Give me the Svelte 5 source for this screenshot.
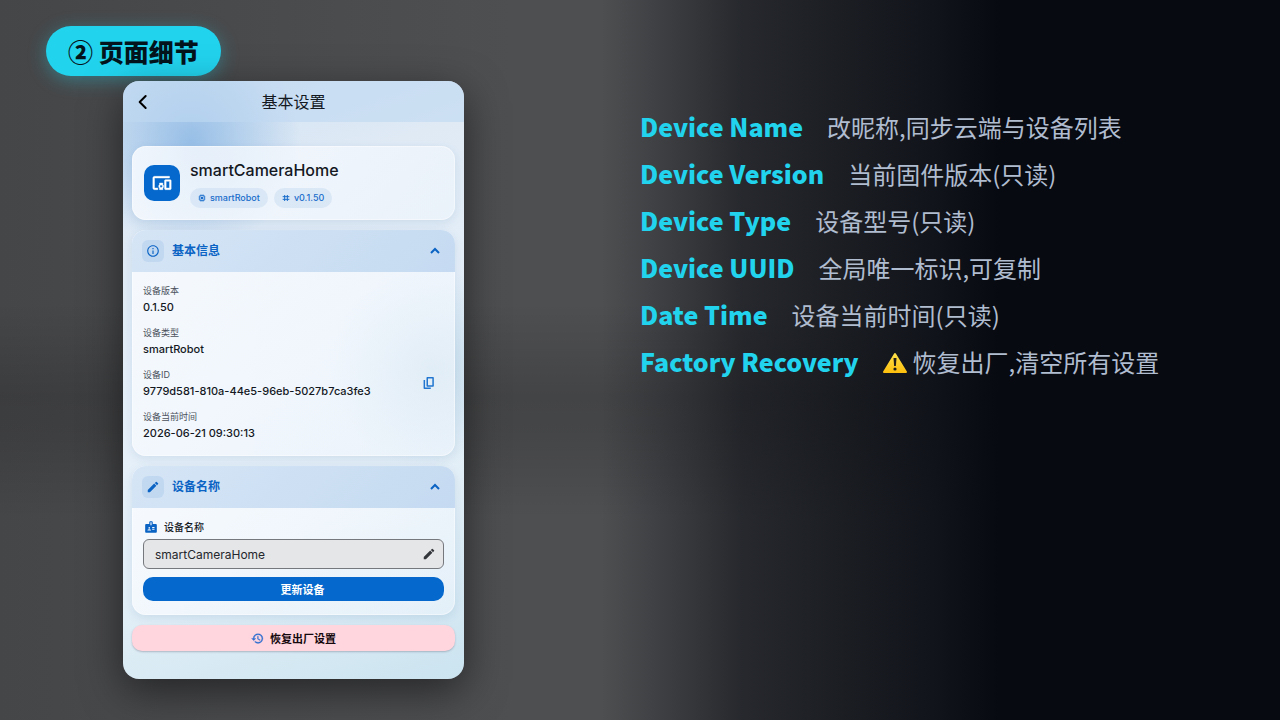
<script>
    let infoOpen = true;
    let nameOpen = true;
    let deviceName = "smartCameraHome";

    const info = [
        { label: "设备版本", value: "0.1.50" },
        { label: "设备类型", value: "smartRobot" },
        { label: "设备ID", value: "9779d581-810a-44e5-96eb-5027b7ca3fe3", copy: true },
        { label: "设备当前时间", value: "2026-06-21 09:30:13" },
    ];

    const notes = [
        { term: "Device Name", text: "改昵称,同步云端与设备列表" },
        { term: "Device Version", text: "当前固件版本(只读)" },
        { term: "Device Type", text: "设备型号(只读)" },
        { term: "Device UUID", text: "全局唯一标识,可复制" },
        { term: "Date Time", text: "设备当前时间(只读)" },
        { term: "Factory Recovery", text: "恢复出厂,清空所有设置", warn: true },
    ];

    const EDIT = "M3 17.25V21h3.75L17.81 9.94l-3.75-3.75L3 17.25zM20.71 7.04a1 1 0 0 0 0-1.41l-2.34-2.34a1 1 0 0 0-1.41 0l-1.83 1.83 3.75 3.75 1.83-1.83z";

    function copyValue(value){
        navigator.clipboard?.writeText(value);
    }
</script>

<main>
    <section class="left">
        <h1 class="chip">② 页面细节</h1>

        <div class="phone">
            <header class="topbar">
                <button class="back" aria-label="返回">
                    <svg viewBox="0 0 24 24"><path d="M16 3l-9 9 9 9" fill="none" stroke="currentColor" stroke-width="3" stroke-linecap="round" stroke-linejoin="round"/></svg>
                </button>
                <h2>基本设置</h2>
            </header>

            <div class="content">
                <div class="card device">
                    <div class="device-icon">
                        <svg viewBox="0 0 24 24"><path d="M3 6h18V4H3c-1.1 0-2 .9-2 2v12c0 1.1.9 2 2 2h4v-2H3V6zm10 6H9v1.78c-.61.55-1 1.33-1 2.22s.39 1.67 1 2.22V20h4v-1.78c.61-.55 1-1.34 1-2.22s-.39-1.67-1-2.22V12zm-2 5.5c-.83 0-1.5-.67-1.5-1.5s.67-1.5 1.5-1.5 1.5.67 1.5 1.5-.67 1.5-1.5 1.5zM22 8h-6c-.5 0-1 .5-1 1v10c0 .5.5 1 1 1h6c.5 0 1-.5 1-1V9c0-.5-.5-1-1-1zm-1 10h-4v-8h4v8z" stroke="currentColor" stroke-width="0.5"/></svg>
                    </div>
                    <div class="device-text">
                        <h3>{deviceName}</h3>
                        <div class="tags">
                            <span class="tag">
                                <svg viewBox="0 0 24 24"><path fill-rule="evenodd" d="M8 4V1h2v3h4V1h2v3h2a2 2 0 0 1 2 2v2h3v2h-3v4h3v2h-3v2a2 2 0 0 1-2 2h-2v3h-2v-3h-4v3H8v-3H6a2 2 0 0 1-2-2v-2H1v-2h3v-4H1V8h3V6a2 2 0 0 1 2-2zM7 7v10h10V7zM9 9h6v6H9z"/></svg>
                                smartRobot
                            </span>
                            <span class="tag">
                                <svg viewBox="0 0 24 24"><path d="M8 3v18M16 3v18M2 8h20M2 16h20" fill="none" stroke="currentColor" stroke-width="3"/></svg>
                                v0.1.50
                            </span>
                        </div>
                    </div>
                </div>

                <div class="card panel">
                    <button class="panel-head" aria-expanded={infoOpen} on:click={() => infoOpen = !infoOpen}>
                        <span class="badge">
                            <svg viewBox="0 0 24 24"><path d="M11 7h2v2h-2zm0 4h2v6h-2zm1-9C6.48 2 2 6.48 2 12s4.48 10 10 10 10-4.48 10-10S17.52 2 12 2zm0 18c-4.41 0-8-3.59-8-8s3.59-8 8-8 8 3.59 8 8-3.59 8-8 8z"/></svg>
                        </span>
                        <span class="panel-title">基本信息</span>
                        <svg class="arrow" class:closed={!infoOpen} viewBox="0 0 24 24"><path d="M6 15l6-6 6 6" fill="none" stroke="currentColor" stroke-width="3"/></svg>
                    </button>
                    {#if infoOpen}
                        <dl>
                            {#each info as row}
                                <div class="row">
                                    <div>
                                        <dt>{row.label}</dt>
                                        <dd>{row.value}</dd>
                                    </div>
                                    {#if row.copy}
                                        <button class="icon-btn copy" aria-label="复制" on:click={() => copyValue(row.value)}>
                                            <svg viewBox="0 0 24 24"><path d="M9 3h10v14H9zM4 7v14h11" fill="none" stroke="currentColor" stroke-width="2.6" stroke-linejoin="round"/></svg>
                                        </button>
                                    {/if}
                                </div>
                            {/each}
                        </dl>
                    {/if}
                </div>

                <div class="card panel">
                    <button class="panel-head" aria-expanded={nameOpen} on:click={() => nameOpen = !nameOpen}>
                        <span class="badge">
                            <svg viewBox="0 0 24 24"><path d={EDIT}/></svg>
                        </span>
                        <span class="panel-title">设备名称</span>
                        <svg class="arrow" class:closed={!nameOpen} viewBox="0 0 24 24"><path d="M6 15l6-6 6 6" fill="none" stroke="currentColor" stroke-width="3"/></svg>
                    </button>
                    {#if nameOpen}
                        <form on:submit|preventDefault>
                            <label for="device-name">
                                <svg viewBox="0 0 24 24"><path d="M20 7h-5V4c0-1.1-.9-2-2-2h-2c-1.1 0-2 .9-2 2v3H4c-1.1 0-2 .9-2 2v11c0 1.1.9 2 2 2h16c1.1 0 2-.9 2-2V9c0-1.1-.9-2-2-2zM9 12c.83 0 1.5.67 1.5 1.5S9.83 15 9 15s-1.5-.67-1.5-1.5S8.17 12 9 12zm3 6H6v-.75c0-1 2-1.5 3-1.5s3 .5 3 1.5V18zm1-9h-2V4h2v5zm5 7.5h-4V15h4v1.5zm0-3h-4V12h4v1.5z"/></svg>
                                设备名称
                            </label>
                            <div class="field">
                                <input id="device-name" type="text" bind:value={deviceName}>
                                <button type="button" class="icon-btn" aria-label="编辑">
                                    <svg viewBox="0 0 24 24"><path d={EDIT}/></svg>
                                </button>
                            </div>
                            <button class="update">更新设备</button>
                        </form>
                    {/if}
                </div>

                <button class="reset">
                    <svg viewBox="0 0 24 24"><path d="M13 3a9 9 0 0 0-9 9H1l3.89 3.89.07.14L9 12H6c0-3.87 3.13-7 7-7s7 3.13 7 7-3.13 7-7 7c-1.93 0-3.68-.79-4.94-2.06l-1.42 1.42A8.954 8.954 0 0 0 13 21a9 9 0 0 0 0-18zm-1 5v5l4.28 2.54.72-1.21-3.5-2.08V8H12z" stroke="currentColor" stroke-width="0.6"/></svg>
                    恢复出厂设置
                </button>
            </div>
        </div>
    </section>

    <ul class="notes">
        {#each notes as note}
            <li>
                <strong>{note.term}</strong>
                <span>
                    {#if note.warn}
                        <svg class="warn" viewBox="0 0 24 24" role="img" aria-label="警告">
                            <defs>
                                <linearGradient id="gold" x1="0" y1="0" x2="0" y2="1">
                                    <stop offset="0" stop-color="#ffe04a"/>
                                    <stop offset="1" stop-color="#fdc00f"/>
                                </linearGradient>
                            </defs>
                            <path d="M12 3L23 21H1z" fill="url(#gold)" stroke="url(#gold)" stroke-width="2" stroke-linejoin="round"/>
                            <path d="M10.500 7h3l-.6 8h-1.800z" fill="#23201a"/>
                            <circle cx="12" cy="18" r="1.600" fill="#23201a"/>
                        </svg>
                    {/if}{note.text}
                </span>
            </li>
        {/each}
    </ul>
</main>

<style>
    :global(body){
        background-color: #070a11;
    }
    main{
        box-sizing: border-box;
        min-height: 100vh;
        display: grid;
        grid-template-columns: 5fr 6fr;
        column-gap: 99px;
        padding: 26px 46px 40px;
        font-family: "Noto Sans CJK SC", sans-serif;
        background:
            linear-gradient(90deg, transparent 47%, rgba(7, 10, 17, 0.35) 54%, rgba(7, 10, 17, 0.56) 58%, rgba(7, 10, 17, 0.72) 66%, rgba(7, 10, 17, 0.86) 73%, #070a11 78%),
            linear-gradient(180deg, transparent 42%, rgba(0, 0, 0, 0.14) 55%, rgba(0, 0, 0, 0.12) 60%, transparent 72%),
            linear-gradient(90deg, #454648, #4e4f51 40%);
    }
    h1, h2, h3, ul, dl, dd{
        margin: 0;
        padding: 0;
    }
    button{
        font-family: inherit;
        border: none;
        background: none;
        padding: 0;
        cursor: pointer;
    }
    svg{
        display: block;
        fill: currentColor;
    }

    .left{
        display: flex;
        flex-direction: column;
        align-items: center;
        gap: 5px;
    }
    .chip{
        align-self: flex-start;
        padding: 0 22px;
        font-size: 25px;
        line-height: 50px;
        font-weight: 900;
        color: #04141c;
        background: #22d3ee;
        border-radius: 25px;
        box-shadow: 0 4px 18px rgba(34, 211, 238, 0.35);
    }
    .phone{
        width: 100%;
        max-width: 341px;
        overflow: hidden;
        border-radius: 16px;
        font-family: Inter, "Noto Sans CJK SC", sans-serif;
        color: #14181f;
        background:
            radial-gradient(circle at 20% 10%, rgba(130, 178, 226, 0.75), transparent 110px),
            radial-gradient(circle at 90% 48%, rgba(190, 216, 232, 0.8), transparent 100px),
            linear-gradient(160deg, #cfe0f2 0%, #dfeaf5 22%, #e6f0f9 50%, #e3eff7 72%, #cbe4f0 100%);
        box-shadow: 0 12px 40px rgba(0, 0, 0, 0.5);
    }
    .topbar{
        display: grid;
        grid-template-columns: 40px 1fr 40px;
        align-items: center;
        height: 41px;
        background: rgba(192, 217, 242, 0.6);
    }
    .topbar h2{
        font-size: 16px;
        line-height: 22px;
        font-weight: 400;
        text-align: center;
    }
    .back svg{
        width: 16px;
        height: 16px;
        margin: 0 auto;
    }
    .content{
        display: flex;
        flex-direction: column;
        gap: 10px;
        padding: 24px 9px 28px;
    }
    .card{
        border-radius: 14px;
        overflow: hidden;
        background: linear-gradient(135deg, rgba(250, 252, 255, 0.85), rgba(240, 246, 253, 0.55));
        box-shadow: inset 0 0 0 1px rgba(255, 255, 255, 0.45), 0 3px 10px rgba(70, 120, 170, 0.14);
    }
    .device{
        display: flex;
        align-items: center;
        gap: 10px;
        padding: 12px;
    }
    .device-icon{
        display: grid;
        place-items: center;
        width: 36px;
        height: 36px;
        border-radius: 10px;
        color: #ffffff;
        background: #0468cc;
    }
    .device-icon svg{
        width: 20px;
        height: 20px;
    }
    .device h3{
        font-size: 16px;
        line-height: 24px;
        font-weight: 500;
    }
    .tags{
        display: flex;
        gap: 6px;
        margin-top: 6px;
    }
    .tag{
        display: flex;
        align-items: center;
        gap: 4px;
        padding: 0 8px;
        font-size: 9px;
        line-height: 20px;
        font-weight: 500;
        color: #1a6dcb;
        background: rgba(205, 224, 244, 0.6);
        border-radius: 10px;
    }
    .tag svg{
        width: 8px;
        height: 8px;
    }

    .panel-head{
        display: flex;
        align-items: center;
        width: 100%;
        height: 42px;
        padding: 0 12px 0 10px;
        color: #0b63c4;
        background: linear-gradient(135deg, rgba(205, 224, 244, 0.8), rgba(190, 214, 239, 0.85));
    }
    .badge{
        display: grid;
        place-items: center;
        width: 22px;
        height: 22px;
        border-radius: 6px;
        background: rgba(170, 202, 234, 0.45);
    }
    .badge svg{
        width: 14px;
        height: 14px;
    }
    .panel-title{
        margin-left: 8px;
        font-size: 12px;
        line-height: 18px;
        font-weight: 700;
    }
    .arrow{
        width: 16px;
        height: 16px;
        margin-left: auto;
    }
    .closed{
        transform: rotate(180deg);
    }
    dl{
        display: flex;
        flex-direction: column;
        gap: 8px;
        padding: 10px 11px 14px;
    }
    .row{
        display: flex;
        align-items: center;
        justify-content: space-between;
    }
    dt{
        font-size: 9px;
        line-height: 17px;
        color: #4b525c;
    }
    dd{
        font-size: 11px;
        line-height: 17px;
        font-weight: 500;
    }
    .icon-btn{
        color: #33363b;
    }
    .icon-btn svg{
        width: 14px;
        height: 14px;
    }
    .icon-btn.copy{
        padding: 0 8px;
        color: #2276cf;
    }

    form{
        padding: 10px 11px 14px;
    }
    label{
        display: flex;
        align-items: center;
        gap: 6px;
        padding-left: 1px;
        font-size: 10px;
        line-height: 18px;
        font-weight: 500;
    }
    label svg{
        width: 14px;
        height: 14px;
        color: #0b63c4;
    }
    .field{
        display: flex;
        align-items: center;
        box-sizing: border-box;
        height: 30px;
        margin: 3px 0 8px;
        padding: 0 7px 0 11px;
        border: 1px solid #75787d;
        border-radius: 6px;
        background: #e5e6e8;
    }
    input{
        flex: 1;
        min-width: 0;
        padding: 0;
        border: none;
        outline: none;
        background: none;
        font-family: inherit;
        font-size: 12px;
        color: #24272c;
    }
    .update, .reset{
        width: 100%;
        font-size: 11px;
        font-weight: 700;
        border-radius: 10px;
    }
    .update{
        display: block;
        height: 24px;
        padding-left: 18px;
        color: #ffffff;
        background: #0468cc;
    }
    .reset{
        display: flex;
        align-items: center;
        justify-content: center;
        gap: 6px;
        height: 26px;
        color: #14080c;
        background: #ffd5de;
        box-shadow: 0 1px 2px rgba(60, 60, 80, 0.3);
    }
    .reset svg{
        width: 13px;
        height: 13px;
        color: #2f6fd0;
    }

    .notes{
        display: grid;
        grid-auto-rows: 47px;
        align-content: start;
        list-style: none;
        padding-top: 78px;
    }
    .notes li{
        display: flex;
        align-items: baseline;
        gap: 24px;
    }
    .notes strong{
        font-size: 25px;
        line-height: 44px;
        font-weight: 900;
        color: #22d3ee;
        white-space: nowrap;
    }
    .notes span{
        font-size: 24px;
        line-height: 44px;
        color: #b0bccf;
    }
    .warn{
        display: inline-block;
        width: 24px;
        height: 24px;
        margin-right: 6px;
        vertical-align: -3px;
    }
</style>
